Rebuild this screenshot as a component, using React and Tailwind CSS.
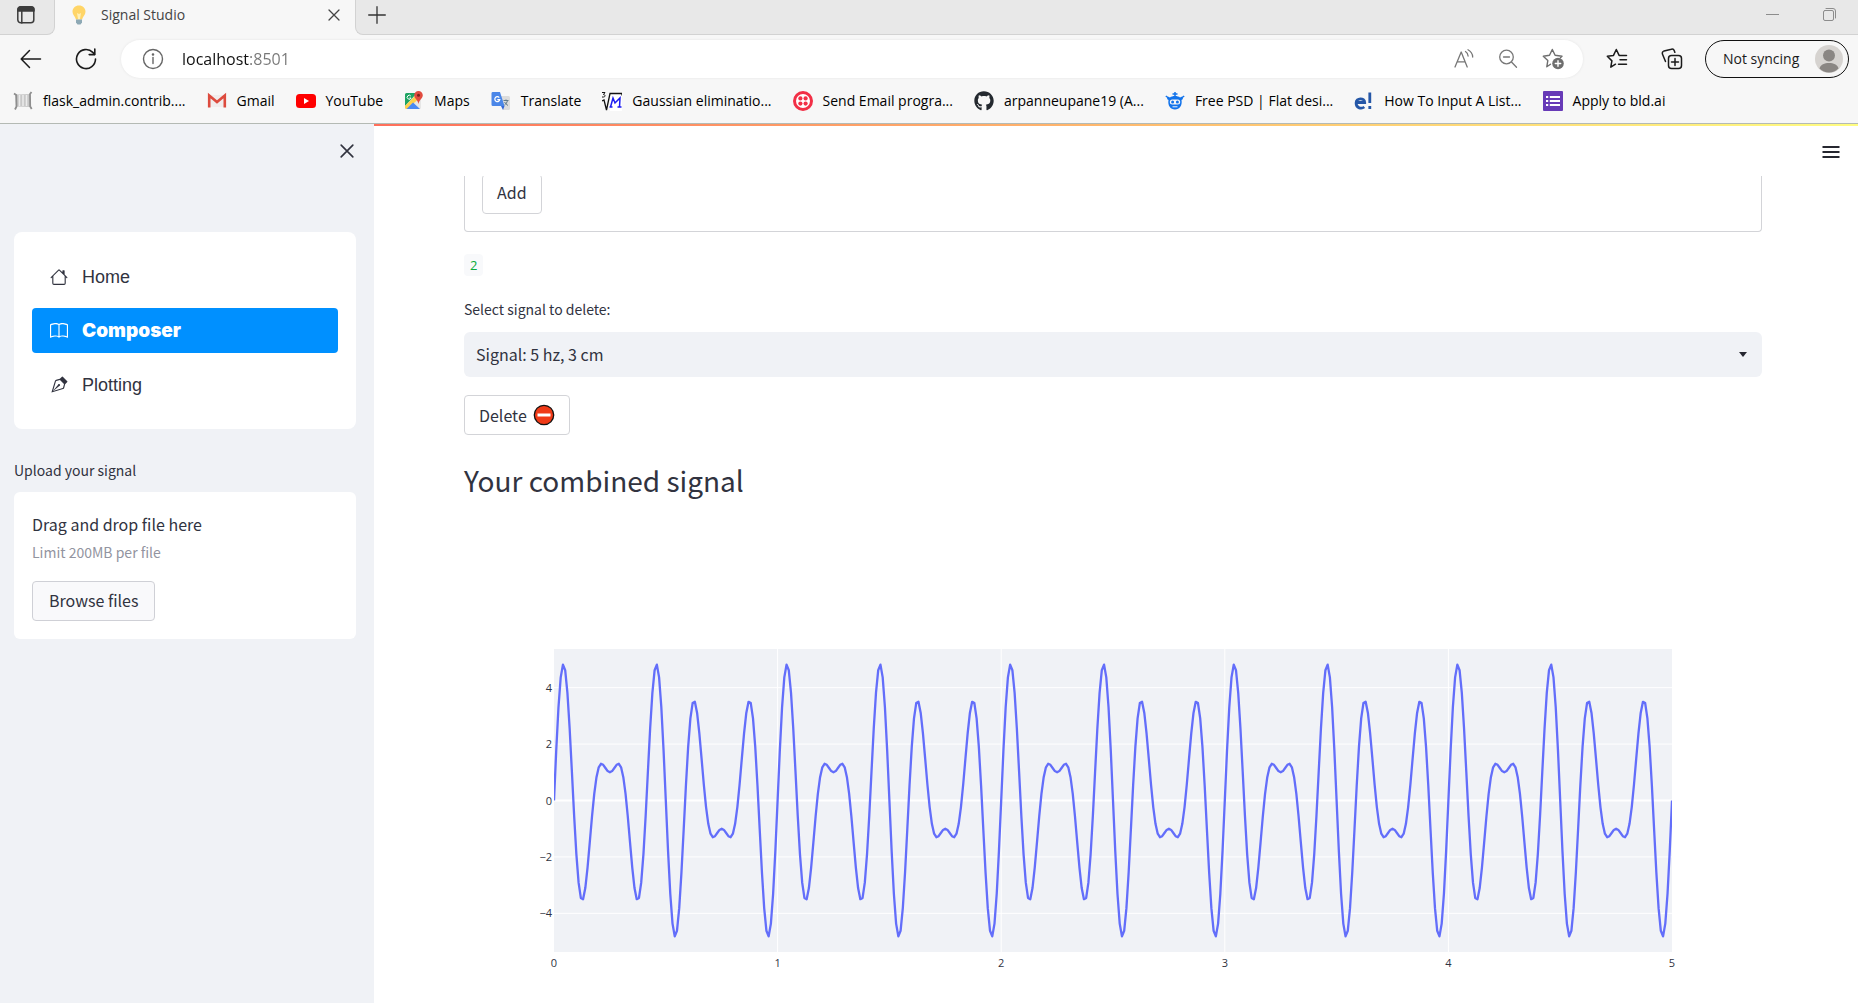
import React, { useState } from "react";
import { BsHouse, BsBook, BsVectorPen } from "react-icons/bs";
import { FaGithub } from "react-icons/fa";

const UI = "font-['Open_Sans','Noto_Sans',sans-serif]";
const APP = "font-['Noto_Sans_CJK_SC','Noto_Sans',sans-serif]";

/* ---------- browser chrome icons ---------- */

const line = {
  fill: "none",
  stroke: "currentColor",
  strokeLinecap: "round",
  strokeLinejoin: "round",
};

function TabsIcon() {
  return (
    <svg width="20" height="20" viewBox="0 0 20 20" {...line} strokeWidth="1.5">
      <rect x="1.8" y="1.8" width="16" height="16" rx="3" />
      <path d="M2 6V4.5A2.6 2.6 0 0 1 4.500 2h11A2.600 2.600 0 0 1 18 4.500V6z" fill="currentColor" />
      <path d="M5.800 6v12" />
    </svg>
  );
}

function BulbIcon() {
  return (
    <svg width="14" height="20" viewBox="0 0 14 20">
      <path d="M7 .5C3.200.5.5 3.200.5 6.600c0 2.600 1.500 4.200 2.500 5.700.5.800.7 1.700.8 2.200h6.400c.1-.5.3-1.400.8-2.200 1-1.500 2.500-3.100 2.500-5.700C13.500 3.200 10.800.5 7 .5z" fill="#ffd567" />
      <path d="M5 8l2 1 2-1-1 6H6z" fill="#fff0b5" />
      <path d="M4 14.500h6v3l-1.500 2h-3L4 17.500z" fill="#8ea9b5" />
    </svg>
  );
}

function CloseIcon({ size, width }) {
  return (
    <svg width={size} height={size} viewBox="0 0 12 12" {...line} strokeWidth={width}>
      <path d="M1 1l10 10M11 1L1 11" />
    </svg>
  );
}

function BackIcon() {
  return (
    <svg width="22" height="20" viewBox="0 0 22 20" {...line} strokeWidth="1.500">
      <path d="M20.500 10H1.500M9.500 1.500L1.200 10l8.300 8.500" />
    </svg>
  );
}

function ReloadIcon() {
  return (
    <svg width="22" height="22" viewBox="0 0 22 22" {...line} strokeWidth="1.600">
      <path d="M20.500 11A9.500 9.500 0 1 1 17.800 4.400L19.500 6.300" />
      <path d="M19.800 1v5.600h-5.600" />
    </svg>
  );
}

function InfoIcon() {
  return (
    <svg width="22" height="22" viewBox="0 0 22 22" {...line} strokeWidth="1.400">
      <circle cx="11" cy="11" r="9.500" />
      <path d="M11 9.500v6" />
      <circle cx="11" cy="6.500" r=".6" fill="currentColor" />
    </svg>
  );
}

function ReadAloudIcon() {
  return (
    <svg width="20" height="20" viewBox="0 0 20 20" {...line} strokeWidth="1.300">
      <path d="M1 18L7.200 3l6 15M3.200 12.800h8" />
      <path d="M11.500 2.500c1.600 1 2.500 2.600 2.600 4.500M14 .800c2.800 1.500 4.500 4.200 4.700 7.200" />
    </svg>
  );
}

function ZoomOutIcon() {
  return (
    <svg width="20" height="20" viewBox="0 0 20 20" {...line} strokeWidth="1.300">
      <circle cx="8.500" cy="8" r="6.800" />
      <path d="M5.500 8h6M13.500 13l5 5.300" />
    </svg>
  );
}

function AddFavoriteIcon() {
  return (
    <svg width="22" height="22" viewBox="0 0 22 22" {...line} strokeWidth="1.400">
      <path d="M8.500 16.200L4.800 18.800l1-6.200L1.300 8.200l6.200-.9L10.300 1.500l2.800 5.800 6.900 1-1.600 1.500" />
      <circle cx="16" cy="15.500" r="5.800" fill="currentColor" stroke="none" />
      <path d="M16 12.800v5.400M13.300 15.500h5.400" stroke="#fff" />
    </svg>
  );
}

function FavoritesIcon() {
  return (
    <svg width="22" height="22" viewBox="0 0 22 22" {...line} strokeWidth="1.500">
      <path d="M9.500 16.200L4.800 19.200l1.100-6.300L1.300 8.300l6.200-.9L10.300 1.500l2.800 5.900h7.400M14 11.700h6.500M12.500 16.200h8" />
    </svg>
  );
}

function CollectionsIcon() {
  return (
    <svg width="22" height="22" viewBox="0 0 22 22" {...line} strokeWidth="1.500">
      <rect x="7.500" y="7.500" width="13" height="13" rx="3" />
      <path d="M14 10.500v7M10.500 14h7" />
      <path d="M4.500 13.500L1.500 6.200a2.500 2.500 0 0 1 1.600-3.300L10.300 1.200a2.500 2.500 0 0 1 3 1.600l.5 1.500" />
    </svg>
  );
}

function AvatarIcon() {
  return (
    <svg width="28" height="28" viewBox="0 0 28 28">
      <circle cx="14" cy="14" r="14" fill="#d6d3d0" />
      <circle cx="14" cy="10.500" r="6" fill="#8a8683" />
      <path d="M4.500 23.500c1-4 5-5.500 9.500-5.500s8.500 1.500 9.500 5.500A14 14 0 0 1 14 27.500a14 14 0 0 1-9.500-4z" fill="#8a8683" />
    </svg>
  );
}

/* ---------- bookmark icons ---------- */

function ScrollIcon() {
  return (
    <svg width="20" height="20" viewBox="0 0 20 20" fill="none">
      <path d="M2.500 3.500L17 3v13l-14-.5z" fill="#c8c8c8" />
      <path d="M1 2.500l2.200 1.500.3 11.500L2 18.500M18.500 1L17 3l.2 12.500 1.500 2.500" stroke="#8e8e8e" strokeWidth="1.800" />
      <path d="M6.500 4v11M10 4v11M13.500 4v11" stroke="#ececec" strokeWidth="1.500" />
    </svg>
  );
}

function GmailIcon() {
  return (
    <svg width="20" height="20" viewBox="0 0 20 20" fill="none">
      <path d="M2 4h16v12H2z" fill="#f1eded" />
      <path d="M2.200 16.500V4.500L10 11l7.800-6.500v12" stroke="#dd4b3e" strokeWidth="2.600" />
    </svg>
  );
}

function YouTubeIcon() {
  return (
    <svg width="20" height="20" viewBox="0 0 20 20">
      <rect y="3" width="20" height="14" rx="3.500" fill="#f00" />
      <path d="M8 7v6l5-3z" fill="#fff" />
    </svg>
  );
}

function MapsIcon() {
  return (
    <svg width="20" height="20" viewBox="0 0 20 20">
      <rect x="1" y="2" width="16" height="16" rx="1.500" fill="#e6e6e6" />
      <path d="M1 3.500A1.500 1.500 0 0 1 2.500 2H13L1 15z" fill="#1fa463" />
      <path d="M1 15L11.500 4.500l2.500 4L3 18H2.500A1.500 1.500 0 0 1 1 16.500z" fill="#ffd04b" />
      <path d="M2.500 18L9 11.500l7 6.500z" fill="#4a89f3" />
      <path d="M14.500 0a4.300 4.300 0 0 0-4.300 4.300c0 3.200 3.300 4 4.300 8.700 1-4.700 4.300-5.500 4.300-8.700A4.300 4.300 0 0 0 14.500 0z" fill="#e14b3f" />
      <circle cx="14.500" cy="4.300" r="1.500" fill="#7d241e" />
      <path d="M6.800 5a2 2 0 1 0 .3 2H5.500" fill="none" stroke="#fff" />
    </svg>
  );
}

function TranslateIcon() {
  return (
    <svg width="20" height="20" viewBox="0 0 20 20">
      <path d="M8 5h9.500A1.500 1.500 0 0 1 19 6.500v11a1.500 1.500 0 0 1-1.500 1.500H12z" fill="#dcdcdc" />
      <path d="M1.500 1H9l4.500 14h-12A1.300 1.300 0 0 1 .5 13.700V2.300A1.300 1.300 0 0 1 1.500 1z" fill="#4a86e8" />
      <path d="M10 15h3.500L12 19z" fill="#3367d6" />
      <path d="M8.300 6.600a2.500 2.500 0 1 0 .5 2H6.300" fill="none" stroke="#fff" strokeWidth="1.200" />
      <path d="M12.500 9.500h5M15 8.500v1M16.500 9.500c-.5 2-1.500 3.500-3 4.500M13.500 11c1 1.500 2 2.500 3.500 3.500" fill="none" stroke="#607988" />
    </svg>
  );
}

function RootMIcon() {
  return (
    <svg width="20" height="20" viewBox="0 0 20 20" fill="none">
      <rect x="8" y="3" width="12" height="17" fill="#fff" />
      <path d="M0 1.500h3L1.500 3.500c2 0 2 2.500 0 2.500H0" stroke="#111" />
      <path d="M0 10l2-1 2.500 10L8 2.500h12v2" stroke="#111" strokeWidth="1.300" />
      <path d="M8.500 16L11 7l2 5 5-5-.5 9M7.500 16h3M15.500 16h4" stroke="#1c1cf0" strokeWidth="1.500" />
    </svg>
  );
}

function TwilioIcon() {
  return (
    <svg width="20" height="20" viewBox="0 0 20 20">
      <circle cx="10" cy="10" r="8.500" fill="#fff" stroke="#f22f46" strokeWidth="3" />
      <g fill="#f22f46">
        <circle cx="7.400" cy="7.400" r="2.100" />
        <circle cx="12.600" cy="7.400" r="2.100" />
        <circle cx="7.400" cy="12.600" r="2.100" />
        <circle cx="12.600" cy="12.600" r="2.100" />
      </g>
    </svg>
  );
}

function RobotIcon() {
  return (
    <svg width="20" height="20" viewBox="0 0 20 20">
      <path d="M10 1v4M7.500 3h5M.8 5l2.700 2M19.200 5l-2.700 2" stroke="#1273eb" strokeWidth="1.500" fill="none" />
      <path d="M5 6.500c2-2 8-2 10 0l2.200-1 .8 2.500-1.500 1c1 5.500-2 9.500-6.500 9.500S2.500 14.500 3.500 9L2 8l.8-2.500z" fill="#1273eb" />
      <rect x="4.800" y="8.500" width="10.400" height="5" rx="2.500" fill="#f7f7f7" />
      <circle cx="7.600" cy="11" r="1.500" fill="#1273eb" />
      <circle cx="12.400" cy="11" r="1.500" fill="#1273eb" />
      <path d="M7.500 15.800h5" stroke="#f7f7f7" />
    </svg>
  );
}

function EducativeIcon() {
  return (
    <svg width="20" height="20" viewBox="0 0 20 20" fill="none" stroke="#2557a7" strokeWidth="2.800">
      <path d="M2.500 11.500h8.200c0-5-8.600-5-8.600.500 0 5.500 5.500 6 8.200 4" />
      <path d="M15.800 1.500v10.500M15.800 15v3" />
    </svg>
  );
}

function FormsIcon() {
  return (
    <svg width="20" height="20" viewBox="0 0 20 20">
      <rect width="20" height="20" rx="1" fill="#673ab7" />
      <path d="M3 6h2.200M3 10h2.200M3 14h2.200M6.800 6H17M6.800 10H17M6.800 14H17" stroke="#fff" strokeWidth="2.200" />
    </svg>
  );
}

const bookmarks = [
  { label: "flask_admin.contrib....", icon: <ScrollIcon /> },
  { label: "Gmail", icon: <GmailIcon /> },
  { label: "YouTube", icon: <YouTubeIcon /> },
  { label: "Maps", icon: <MapsIcon /> },
  { label: "Translate", icon: <TranslateIcon /> },
  { label: "Gaussian eliminatio...", icon: <RootMIcon /> },
  { label: "Send Email progra...", icon: <TwilioIcon /> },
  { label: "arpanneupane19 (A...", icon: <FaGithub size={20} color="#24292f" /> },
  { label: "Free PSD | Flat desi...", icon: <RobotIcon /> },
  { label: "How To Input A List...", icon: <EducativeIcon /> },
  { label: "Apply to bld.ai", icon: <FormsIcon /> },
];

function BrowserChrome() {
  const [url, setUrl] = useState("localhost:8501");
  return (
    <header className={`${UI} shrink-0 border-b border-[#b4bab4] bg-[#f7f7f7] text-[#1b1b1b]`}>
      <div className="flex h-[35px] bg-[#f7f7f7]">
        <div className="flex w-[55px] items-center rounded-br-lg border-r border-b border-[#d2d2d2] bg-[#e8e8e8] pb-[5px] pl-4 text-[#3c3c3c]">
          <button aria-label="Tab actions"><TabsIcon /></button>
        </div>
        <div className="flex w-[300px] items-center pr-[15px] pb-[5px] pl-[17px] text-[#444]">
          <BulbIcon />
          <span className="ml-[15px] flex-1 text-sm">Signal Studio</span>
          <button aria-label="Close tab"><CloseIcon size={12} width={1.3} /></button>
        </div>
        <div className="flex flex-1 items-center rounded-bl-lg border-b border-l border-[#d2d2d2] bg-[#e8e8e8] pr-[22px] pb-[5px] pl-3">
          <button aria-label="New tab" className="text-[#333]">
            <svg width="18" height="18" viewBox="0 0 18 18" {...line} strokeWidth="1.300"><path d="M9 .7v16.600M.7 9h16.600" /></svg>
          </button>
          <div className="ml-auto flex items-center gap-11 text-[#8c8c8c]">
            <button aria-label="Minimize">
              <svg width="13" height="13" viewBox="0 0 13 13" {...line}><path d="M0 6.500h13" /></svg>
            </button>
            <button aria-label="Restore">
              <svg width="13" height="13" viewBox="0 0 13 13" {...line}>
                <rect x=".5" y="2.500" width="10" height="10" rx="1.500" />
                <path d="M3 .5h7a2.500 2.500 0 0 1 2.500 2.500v7" />
              </svg>
            </button>
          </div>
        </div>
      </div>

      <div className="flex h-12 items-center pr-[9px] pl-5">
        <button aria-label="Back" className="mr-[33px]"><BackIcon /></button>
        <button aria-label="Reload" className="mr-6"><ReloadIcon /></button>
        <div className="flex h-[38px] flex-1 items-center rounded-full bg-white pr-[19px] pl-[21px] text-[#666] shadow-[0_0_3px_rgba(0,0,0,0.08)]">
          <button aria-label="Site information"><InfoIcon /></button>
          <input
            aria-label="Address"
            value={url}
            onChange={(e) => setUrl(e.target.value)}
            className="ml-[18px] min-w-0 flex-1 bg-[linear-gradient(to_right,#111_68px,#777_68px)] bg-clip-text text-base text-transparent outline-none"
          />
          <button aria-label="Read aloud" className="mr-6 text-[#777]"><ReadAloudIcon /></button>
          <button aria-label="Zoom" className="mr-6 text-[#777]"><ZoomOutIcon /></button>
          <button aria-label="Add to favorites" className="text-[#6e6e6e]"><AddFavoriteIcon /></button>
        </div>
        <button aria-label="Favorites" className="mr-[33px] ml-[23px]"><FavoritesIcon /></button>
        <button aria-label="Collections" className="mr-[22px]"><CollectionsIcon /></button>
        <button className="flex h-[38px] w-36 items-center justify-between rounded-full border border-[#111] pr-[5px] pl-[17px] text-sm">
          Not syncing
          <AvatarIcon />
        </button>
      </div>

      <nav aria-label="Bookmarks" className="flex h-10 items-center gap-[21px] pb-1 pl-[13px] text-sm whitespace-nowrap text-black">
        {bookmarks.map((b) => (
          <a key={b.label} href="#" className="flex items-center gap-[10px]">
            {b.icon}
            {b.label}
          </a>
        ))}
      </nav>
    </header>
  );
}

/* ---------- sidebar ---------- */

const pages = [
  { label: "Home", Icon: BsHouse },
  { label: "Composer", Icon: BsBook },
  { label: "Plotting", Icon: BsVectorPen },
];

function Sidebar() {
  return (
    <aside className="w-[374px] shrink-0 bg-[#f0f2f6] pr-[18px] pl-[14px]">
      <div className="flex h-[108px] justify-end pt-5 pr-[2px]">
        <button aria-label="Close sidebar" className="h-[14px]"><CloseIcon size={14} width={1.4} /></button>
      </div>
      <nav className="flex flex-col gap-[9px] rounded-lg bg-white px-[18px] py-[22px] font-['Liberation_Sans',Arial,sans-serif] text-lg">
        {pages.map(({ label, Icon }) =>
          label === "Composer" ? (
            <a key={label} href="#" aria-current="page" className="flex h-[45px] items-center gap-[14px] rounded bg-[#0090ff] px-[18px] font-['Inter',sans-serif] text-[19px] font-black text-white">
              <Icon size={18} />
              {label}
            </a>
          ) : (
            <a key={label} href="#" className="flex h-[45px] items-center gap-[14px] px-[18px]">
              <Icon size={18} />
              {label}
            </a>
          )
        )}
      </nav>
      <section>
        <h2 className="mt-[30px] mb-[11px] text-sm leading-[22px]">Upload your signal</h2>
        <div className="rounded-md bg-white p-[18px]">
          <p className="text-base leading-7">Drag and drop file here</p>
          <p className="text-sm leading-7 text-[#9294a0]">Limit 200MB per file</p>
          <button className="mt-[15px] h-10 rounded border border-[#cfd0d6] bg-[#f9f9fb] px-4 pb-[2px] text-base">Browse files</button>
        </div>
      </section>
    </aside>
  );
}

/* ---------- chart ---------- */

const Y_MAX = 5.37;
const points = Array.from({ length: 501 }, (_, i) => {
  const t = i / 100;
  const y = 3 * Math.sin(10 * Math.PI * t) + 2 * Math.sin(14 * Math.PI * t);
  return `${t},${(-y).toFixed(4)}`;
}).join(" ");
const yTicks = [4, 2, 0, -2, -4];
const xTicks = [0, 1, 2, 3, 4, 5];

function SignalChart() {
  return (
    <figure aria-label="Combined signal" className="mt-[149px] px-[90px] font-['Open_Sans',sans-serif] text-[11px] leading-4 text-[#31333f]">
      <div className="relative h-[303px] bg-[#f0f2f6]">
        <svg className="h-full w-full" viewBox={`0 ${-Y_MAX} 5 ${Y_MAX * 2}`} preserveAspectRatio="none">
          <g stroke="#fff">
            {yTicks.map((v) => (
              <line key={v} x1="0" x2="5" y1={-v} y2={-v} strokeWidth={v === 0 ? 2 : 1} vectorEffect="non-scaling-stroke" />
            ))}
            {xTicks.slice(1, 5).map((v) => (
              <line key={v} x1={v} x2={v} y1={-Y_MAX} y2={Y_MAX} strokeWidth="1" vectorEffect="non-scaling-stroke" />
            ))}
          </g>
          <polyline points={points} fill="none" stroke="#636efa" strokeWidth="2.3" strokeLinejoin="round" vectorEffect="non-scaling-stroke" />
        </svg>
        {yTicks.map((v) => (
          <span
            key={v}
            className="absolute right-full mr-[2px] -translate-y-1/2"
            style={{ top: `${((Y_MAX - v) / (Y_MAX * 2)) * 100}%` }}
          >
            {v < 0 ? `−${-v}` : v}
          </span>
        ))}
        {xTicks.map((v) => (
          <span key={v} className="absolute top-full mt-[3px] -translate-x-1/2" style={{ left: `${(v / 5) * 100}%` }}>
            {v}
          </span>
        ))}
      </div>
    </figure>
  );
}

/* ---------- main ---------- */

function NoEntryIcon() {
  return (
    <svg width="22" height="22" viewBox="0 0 22 22">
      <circle cx="11" cy="11" r="9.700" fill="#f03a17" stroke="#111" strokeWidth="1.300" />
      <rect x="4.500" y="9.500" width="13" height="3" fill="#fff" />
    </svg>
  );
}

function Composer() {
  return (
    <main className="min-w-0 flex-1 bg-white">
      <div className="h-[2px] bg-linear-to-r from-[#ff6f5b] to-[#fffd80]" />
      <div className="flex h-[50px] items-center justify-end pt-[2px] pr-[18px]">
        <button aria-label="Menu">
          <svg width="18" height="14" viewBox="0 0 18 14" stroke="#262730" strokeWidth="1.800"><path d="M.5 2h17M.5 7h17M.5 12h17" /></svg>
        </button>
      </div>
      <div className="pr-24 pl-[90px]">
        <form onSubmit={(e) => e.preventDefault()} className="flex h-14 items-end overflow-hidden rounded-b border-x border-b border-[#d3d4d8] px-[17px] pb-[17px]">
          <button className="h-10 shrink-0 rounded border border-[#d3d4d8] px-[14px] pb-1 text-base">Add</button>
        </form>
        <div className="mt-[22px] flex">
          <code className="rounded bg-[#f8f9fb] px-[6px] font-['Open_Sans',sans-serif] text-[13px] leading-[22px] text-[#09ab3b]">2</code>
        </div>
        <label htmlFor="signal" className="mt-[22px] mb-3 block text-sm leading-[22px]">Select signal to delete:</label>
        <div className="relative">
          <select id="signal" className="block h-[45px] w-full appearance-none rounded-md bg-[#f0f2f6] px-3 pb-[2px] text-base outline-none">
            <option>Signal: 5 hz, 3 cm</option>
          </select>
          <svg className="pointer-events-none absolute top-5 right-[15px]" width="8" height="5" viewBox="0 0 8 5"><path d="M0 0h8L4 5z" fill="#262730" /></svg>
        </div>
        <button className="mt-[18px] flex h-10 items-center gap-[6px] rounded border border-[#d3d4d8] px-[14px] text-base">
          Delete
          <NoEntryIcon />
        </button>
        <h3 className="mt-[25px] text-[28px] leading-10">Your combined signal</h3>
        <SignalChart />
      </div>
    </main>
  );
}

export default function App() {
  return (
    <div className="flex h-screen flex-col overflow-hidden">
      <BrowserChrome />
      <div className={`${APP} flex min-h-0 flex-1 text-[#31333f]`}>
        <Sidebar />
        <Composer />
      </div>
    </div>
  );
}
